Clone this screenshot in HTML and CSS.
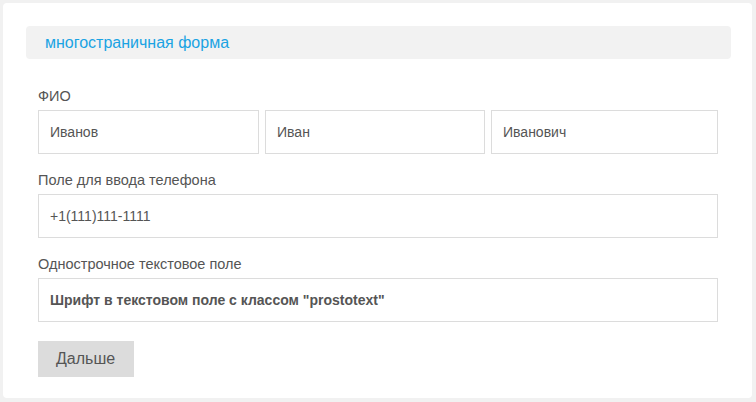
FILE: index.html
```html
<!DOCTYPE html>
<html lang="ru">
<head>
<meta charset="utf-8">
<link rel="stylesheet" href="styles.css">
</head>
<body>
<div class="card">
  <div class="title">многостраничная форма</div>
  <form class="form">
    <div class="group">
      <div class="label">ФИО</div>
      <div class="row3">
        <div class="field">Иванов</div>
        <div class="field">Иван</div>
        <div class="field">Иванович</div>
      </div>
    </div>
    <div class="group">
      <div class="label">Поле для ввода телефона</div>
      <div class="field">+1(111)111-1111</div>
    </div>
    <div class="group last">
      <div class="label">Однострочное текстовое поле</div>
      <div class="field bold">Шрифт в текстовом поле с классом "prostotext"</div>
    </div>
    <div class="btn">Дальше</div>
  </form>
</div>
</body>
</html>
```
FILE: styles.css
```css
html, body { margin: 0; padding: 0; }
body {
  background: #f1f1f1;
  font-family: "Liberation Sans", Arial, sans-serif;
  padding: 3px 4px 4px 3px;
  height: 402px;
  box-sizing: border-box;
}
.card {
  background: #fff;
  border-radius: 4px;
  height: 395px;
  box-sizing: border-box;
  padding: 23px 21px 0 23px;
}
.title {
  background: #f2f2f2;
  border-radius: 4px;
  height: 33px;
  line-height: 33px;
  padding-left: 19px;
  color: #1aa3e3;
  font-size: 16px;
}
.form {
  padding: 29px 13px 0 12px;
}
.group { margin-bottom: 18px; }
.group.last { margin-bottom: 19px; }
.label {
  color: #555;
  font-size: 14.5px;
  line-height: 16px;
  margin-bottom: 6px;
}
.row3 {
  display: grid;
  grid-template-columns: 221px 220px 1fr;
  gap: 6px;
}
.field {
  border: 1px solid #dcdcdc;
  height: 44px;
  box-sizing: border-box;
  padding-left: 11px;
  line-height: 42px;
  font-size: 14px;
  color: #555;
}
.field.bold { font-weight: bold; }
.btn {
  display: inline-block;
  background: #dcdcdc;
  color: #555;
  font-size: 16px;
  height: 36px;
  line-height: 36px;
  padding: 0 19px 0 18px;
}
```
